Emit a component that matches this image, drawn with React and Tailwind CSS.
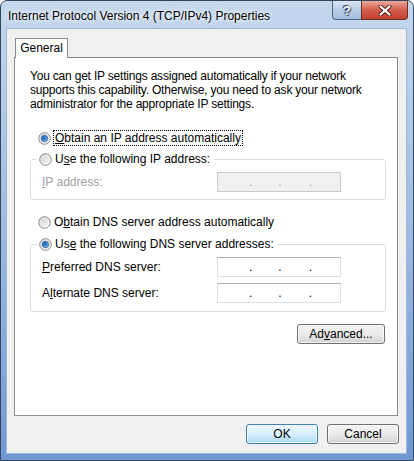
import React from 'react'

const font = { fontFamily: '"Liberation Sans", Arial, sans-serif' }

function Radio({ checked }) {
  return (
    <svg width="13" height="13" viewBox="0 0 13 13" className="shrink-0">
      <defs>
        <linearGradient id="radioFill" x1="0" y1="0" x2="1" y2="1">
          <stop offset="0" stopColor="#cfcfcf" />
          <stop offset="1" stopColor="#fbfbfb" />
        </linearGradient>
        <radialGradient id="radioDot" cx="0.4" cy="0.4" r="0.6">
          <stop offset="0" stopColor="#2a5da8" />
          <stop offset="0.55" stopColor="#3f88d6" />
          <stop offset="1" stopColor="#8cc7f3" />
        </radialGradient>
      </defs>
      <circle cx="6.5" cy="6.5" r="5.8" fill="url(#radioFill)" stroke="#8a8a8a" strokeWidth="1" />
      <circle cx="6.5" cy="6.5" r="4.3" fill="none" stroke="#ffffff" strokeOpacity="0.6" strokeWidth="0.8" />
      {checked && <circle cx="6.5" cy="6.5" r="3.3" fill="url(#radioDot)" stroke="#1e3f73" strokeWidth="0.6" />}
    </svg>
  )
}

function IpBox({ disabled }) {
  return (
    <div
      className={
        disabled
          ? 'flex h-[20px] w-[124px] items-end border border-[#c9c9c9] bg-[#f0f0f0] pb-[3px] text-[12px] leading-[12px] text-[#a0a0a0]'
          : 'flex h-[20px] w-[124px] items-end border border-[#dbdfe6] border-t-[#abadb3] bg-white pb-[3px] text-[12px] leading-[12px] text-black'
      }
    >
      <span className="w-[31px]" />
      <span>.</span>
      <span className="w-[26px]" />
      <span>.</span>
      <span className="w-[27px]" />
      <span>.</span>
    </div>
  )
}

function WinButton({ children, primary, className = '' }) {
  return (
    <button
      type="button"
      className={
        (primary
          ? 'border-[#3c7fb1] bg-linear-to-b from-[#eaf6fd] via-[#d9f0fc] to-[#a7d9f5] '
          : 'border-[#707070] bg-linear-to-b from-[#f2f2f2] via-[#ebebeb] to-[#d2d2d2] ') +
        'flex h-[20px] items-center justify-center rounded-[3px] border text-[12px] text-black shadow-[inset_0_0_0_1px_rgba(255,255,255,0.7)] ' +
        className
      }
    >
      {children}
    </button>
  )
}

export default function App() {
  return (
    <div
      style={font}
      className="flex h-[461px] w-[414px] flex-col overflow-hidden rounded-t-[7px] border border-[#34465e] bg-linear-to-b from-[#c5d8ee] via-[#9dbbe3] to-[#6f98d2] text-[12px] text-black"
    >
      {/* title bar */}
      <div className="flex h-[28px] shrink-0 items-start">
        <div className="flex h-full flex-1 items-center pl-[7px] pt-[1px] text-[12px] [text-shadow:0_0_6px_#ffffff,0_0_3px_#ffffff]">
          Internet Protocol Version 4 (TCP/IPv4) Properties
        </div>
        <div className="mr-[5px] flex">
          <div className="flex h-[19px] w-[29px] items-center justify-center rounded-bl-[4px] border border-r-0 border-t-0 border-[#4e6689] bg-linear-to-b from-[#dbe6f4] via-[#b9cde7] to-[#a3bedf] text-[13px] font-bold leading-none text-white [text-shadow:0_0_1px_#2a3c55,1px_1px_1px_#2a3c55,-1px_-1px_1px_#2a3c55]">
            ?
          </div>
          <div className="flex h-[19px] w-[47px] items-center justify-center rounded-br-[4px] border border-t-0 border-[#6b2a22] bg-linear-to-b from-[#e9a99c] via-[#d45e4d] to-[#c2402f]">
            <svg width="14" height="11" viewBox="0 0 14 11">
              <path d="M2.5 1.5 L11.5 9.5 M11.5 1.5 L2.5 9.5" stroke="#5a1c14" strokeWidth="4" strokeLinecap="round" />
              <path d="M2.5 1.5 L11.5 9.5 M11.5 1.5 L2.5 9.5" stroke="#ffffff" strokeWidth="2.2" strokeLinecap="round" />
            </svg>
          </div>
        </div>
      </div>

      {/* client area */}
      <div className="mb-[7px] ml-[6px] mr-[7px] flex flex-1 flex-col bg-[#f0f0f0] pl-[7px] pt-[9px] pr-[7px] pb-[9px] shadow-[0_0_0_1px_#9fb6d4]">
        <div className="relative z-10 -mb-px ml-[1px] flex h-[20px] w-[53px] items-center justify-center border border-b-0 border-[#898c95] bg-white pb-[1px]">
          General
        </div>

        <div className="flex h-[359px] w-[384px] flex-col border border-[#898c95] bg-white pl-[15px] pt-[11px]">
          <p className="whitespace-nowrap leading-[14px] tracking-[-0.2px]">
            You can get IP settings assigned automatically if your network
            <br />
            supports this capability. Otherwise, you need to ask your network
            <br />
            administrator for the appropriate IP settings.
          </p>

          <div className="mt-[19px] flex items-center pl-[8px]">
            <Radio checked />
            <span className="ml-[2px] border border-dotted border-black px-[1px] leading-[14px]">
              <u>O</u>btain an IP address automatically
            </span>
          </div>

          <fieldset className="mt-[6px] w-[356px] rounded-[3px] border border-[#d5dfe5] pb-[7px] pl-[6px]">
            <legend className="flex items-center pl-[2px] pr-[4px] leading-[14px]">
              <Radio />
              <span className="ml-[3px]">
                U<u>s</u>e the following IP address:
              </span>
            </legend>
            <div className="mt-[6px] flex items-center pl-[5px]">
              <span className="w-[175px] text-[#a0a0a0]">
                <u>I</u>P address:
              </span>
              <IpBox disabled />
            </div>
          </fieldset>

          <div className="mt-[15px] flex items-center pl-[8px] leading-[14px]">
            <Radio />
            <span className="ml-[3px]">
              O<u>b</u>tain DNS server address automatically
            </span>
          </div>

          <fieldset className="mt-[8px] w-[356px] rounded-[3px] border border-[#d5dfe5] pb-[8px] pl-[6px]">
            <legend className="flex items-center pl-[2px] pr-[4px] leading-[14px]">
              <Radio checked />
              <span className="ml-[3px]">
                Us<u>e</u> the following DNS server addresses:
              </span>
            </legend>
            <div className="mt-[6px] flex items-center pl-[5px]">
              <span className="w-[175px]">
                <u>P</u>referred DNS server:
              </span>
              <IpBox />
            </div>
            <div className="mt-[6px] flex items-center pl-[5px]">
              <span className="w-[175px]">
                A<u>l</u>ternate DNS server:
              </span>
              <IpBox />
            </div>
          </fieldset>

          <div className="mt-[12px] flex w-[356px] justify-end pr-[1px]">
            <WinButton className="w-[88px]">
              Ad<u>v</u>anced...
            </WinButton>
          </div>
        </div>

        <div className="mt-[8px] flex justify-end gap-[9px]">
          <WinButton primary className="w-[72px]">
            OK
          </WinButton>
          <WinButton className="w-[72px]">Cancel</WinButton>
        </div>
      </div>
    </div>
  )
}
